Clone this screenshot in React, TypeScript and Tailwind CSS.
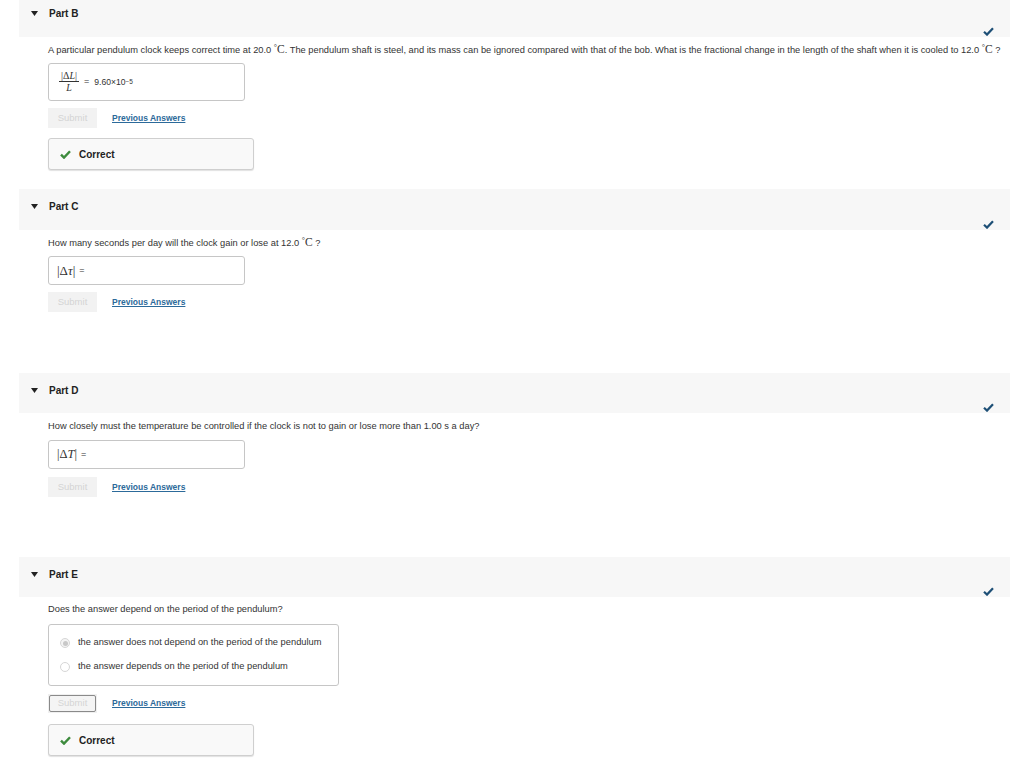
import React from "react";

const sans = { fontFamily: '"Liberation Sans", Arial, sans-serif' };
const serif = { fontFamily: '"Liberation Serif", "Times New Roman", serif' };

function Check() {
  return (
    <svg width="11" height="9" viewBox="0 0 11 9">
      <path d="M1 4.8 L4 7.6 L10 1.2" fill="none" stroke="#1d4f76" strokeWidth="2.2" />
    </svg>
  );
}

function Header({ label, h = 41, pt = 10 }: { label: string; h?: number; pt?: number }) {
  return (
    <div className="ml-[19px] w-[991px] bg-[#f7f7f7] flex items-end justify-between" style={{ height: h }}>
      <div className="self-start flex items-center pl-[12px]" style={{ paddingTop: pt }}>
        <svg width="7" height="5" viewBox="0 0 7 5" className="mr-[11px]">
          <path d="M0 0 L7 0 L3.5 5 Z" fill="#222" />
        </svg>
        <span className="text-[10px] font-bold text-[#222]">{label}</span>
      </div>
      <div className="mr-[16px] mb-[1px]">
        <Check />
      </div>
    </div>
  );
}

function SubmitRow({ bordered = false }: { bordered?: boolean }) {
  return (
    <div className={bordered ? "flex items-center ml-[48px] gap-[15px] h-[19px]" : "flex items-center ml-[48px] gap-[15px] h-[20px]"}>
      {bordered ? (
        <div className="w-[49px] h-[19px] bg-[#f0f0f0] p-[1px]">
          <div className="w-full h-full border border-[#8a8a8a] rounded-[2px] bg-[#f4f4f4] flex items-center justify-center text-[9.5px] text-[#d4d4d4]">
            Submit
          </div>
        </div>
      ) : (
        <div className="w-[49px] h-[20px] bg-[#f2f2f2] flex items-center justify-center text-[9.5px] text-[#d4d4d4]">
          Submit
        </div>
      )}
      <span className="text-[8.5px] font-bold text-[#2c6a9a] underline">Previous Answers</span>
    </div>
  );
}

function Correct() {
  return (
    <div className="ml-[48px] w-[206px] h-[32px] border border-[#cfcfcf] rounded-[3px] bg-[#f9f9f9] shadow-[0_1px_1px_rgba(0,0,0,0.12)] flex items-center pl-[11px]">
      <svg width="11" height="9" viewBox="0 0 11 9" className="mr-[8px]">
        <path d="M1 4.6 L4 7.6 L10 1.2" fill="none" stroke="#3d8b3d" strokeWidth="2.4" />
      </svg>
      <span className="text-[10px] font-bold text-[#222]">Correct</span>
    </div>
  );
}

function Question({ children }: { children: React.ReactNode }) {
  return (
    <div className="ml-[48px] h-[12px] flex items-center text-[9.3px] text-[#333] whitespace-nowrap">
      <span>{children}</span>
    </div>
  );
}

function DegC() {
  return (
    <span style={serif}>
      <span className="text-[8px] relative top-[-3px]">°</span>
      <span className="text-[11.5px]">C</span>
    </span>
  );
}

function Gap({ h }: { h: number }) {
  return <div style={{ height: h }} />;
}

export default function App() {
  return (
    <div style={sans} className="w-[1024px] h-[772px] bg-white overflow-hidden relative text-[#333]">
      {/* Part B */}
      <Header label="Part B" h={37} pt={6} />
      <Gap h={7} />
      <Question>
        A particular pendulum clock keeps correct time at 20.0 <DegC />. The pendulum shaft is steel, and its mass can be ignored compared with that of the bob. What is the fractional change in the length of the shaft when it is cooled to 12.0 <DegC /> ?
      </Question>
      <Gap h={7} />
      <div className="ml-[48px] w-[197px] h-[38px] border border-[#c6c6c6] rounded-[3px] flex items-center pl-[10px]">
        <div className="flex flex-col items-center mr-[5px]" style={serif}>
          <span className="text-[10px] leading-[11px]">
            |Δ<i>L</i>|
          </span>
          <span className="w-[20px] h-[1px] bg-[#333]" />
          <span className="text-[10px] leading-[12px]">
            <i>L</i>
          </span>
        </div>
        <span className="text-[9px] mr-[5px]">=</span>
        <span className="text-[8.6px]">
          9.60×10<sup className="text-[6.5px] relative top-[-1px]">−5</sup>
        </span>
      </div>
      <Gap h={7} />
      <SubmitRow />
      <Gap h={10} />
      <Correct />
      <Gap h={19} />

      {/* Part C */}
      <Header label="Part C" />
      <Gap h={7} />
      <Question>
        How many seconds per day will the clock gain or lose at 12.0 <DegC /> ?
      </Question>
      <Gap h={7} />
      <div className="ml-[48px] w-[197px] h-[29px] border border-[#c6c6c6] rounded-[3px] flex items-center pl-[8px] text-[9px]">
        <span style={serif} className="text-[13px]">
          |Δ<i>τ</i>|
        </span>
        <span className="ml-[4px]">=</span>
      </div>
      <Gap h={7} />
      <SubmitRow />
      <Gap h={61} />

      {/* Part D */}
      <Header label="Part D" h={40} />
      <Gap h={8} />
      <Question>How closely must the temperature be controlled if the clock is not to gain or lose more than 1.00 s a day?</Question>
      <Gap h={7} />
      <div className="ml-[48px] w-[197px] h-[29px] border border-[#c6c6c6] rounded-[3px] flex items-center pl-[8px] text-[9px]">
        <span style={serif} className="text-[12.5px]">
          |Δ<i>T</i>|
        </span>
        <span className="ml-[4px]">=</span>
      </div>
      <Gap h={8} />
      <SubmitRow />
      <Gap h={60} />

      {/* Part E */}
      <Header label="Part E" h={40} />
      <Gap h={7} />
      <Question>Does the answer depend on the period of the pendulum?</Question>
      <Gap h={8} />
      <div className="ml-[48px] w-[291px] h-[62px] border border-[#c6c6c6] rounded-[3px] flex flex-col justify-center gap-[12px] pl-[11px] text-[9.3px]">
        <div className="flex items-center h-[12px]">
          <span className="w-[10px] h-[10px] rounded-full border border-[#d6d6d6] bg-[#f4f4f4] flex items-center justify-center mr-[8px]">
            <span className="w-[5px] h-[5px] rounded-full bg-[#c8c8c8]" />
          </span>
          the answer does not depend on the period of the pendulum
        </div>
        <div className="flex items-center h-[12px]">
          <span className="w-[10px] h-[10px] rounded-full border border-[#d6d6d6] bg-white mr-[8px]" />
          the answer depends on the period of the pendulum
        </div>
      </div>
      <Gap h={8} />
      <SubmitRow bordered />
      <Gap h={11} />
      <Correct />
    </div>
  );
}
